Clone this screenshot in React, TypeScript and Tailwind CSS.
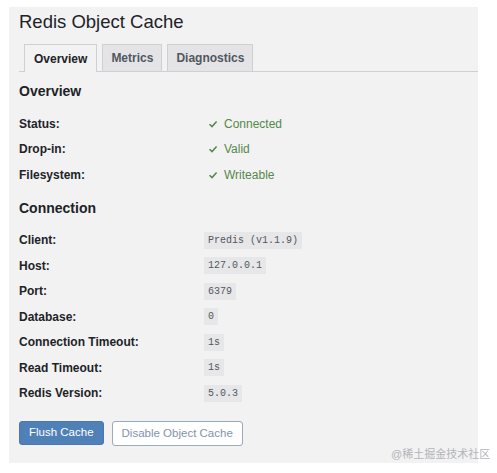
const status = [
  { label: "Status:", value: "Connected" },
  { label: "Drop-in:", value: "Valid" },
  { label: "Filesystem:", value: "Writeable" },
];

const connection = [
  { label: "Client:", value: "Predis (v1.1.9)" },
  { label: "Host:", value: "127.0.0.1" },
  { label: "Port:", value: "6379" },
  { label: "Database:", value: "0" },
  { label: "Connection Timeout:", value: "1s" },
  { label: "Read Timeout:", value: "1s" },
  { label: "Redis Version:", value: "5.0.3" },
];

function Check() {
  return (
    <svg width="10" height="10" viewBox="0 0 10 10" className="shrink-0">
      <path d="M1.5 5.2 L4 7.6 L8.6 2.4" fill="none" stroke="#55894a" strokeWidth="1.5" />
    </svg>
  );
}

export default function App() {
  return (
    <div
      className="w-[497px] h-[473px] bg-white relative overflow-hidden"
      style={{ fontFamily: '"Liberation Sans", Arial, sans-serif' }}
    >
      <div className="absolute left-[9px] top-[7px] w-[469px] h-[456px] bg-[#f2f2f3] pl-[10px] pt-[1px] text-[#1d2327]">
        <h1 className="text-[18.5px] leading-[28px] font-normal">Redis Object Cache</h1>

        {/* Tabs */}
        <div className="flex items-end gap-[5px] mt-[8px] pl-[5px] border-b border-[#cfd0d2] h-[28px]">
          <div className="h-[28px] px-[9px] flex items-center text-[12px] font-bold border border-[#cfd0d2] border-b-0 bg-[#f2f2f3] -mb-px relative">
            Overview
          </div>
          <div className="h-[27px] px-[8px] flex items-center text-[12px] font-bold text-[#50575e] border border-[#cfd0d2] border-b-0 bg-[#e4e4e6]">
            Metrics
          </div>
          <div className="h-[27px] px-[8px] flex items-center text-[12px] font-bold text-[#50575e] border border-[#cfd0d2] border-b-0 bg-[#e4e4e6]">
            Diagnostics
          </div>
        </div>

        <h2 className="text-[14px] font-bold mt-[10px] leading-[18px]">Overview</h2>
        <div className="mt-[11px] flex flex-col">
          {status.map((r) => (
            <div key={r.label} className="flex items-center h-[25.5px] text-[12px]">
              <div className="w-[189px] font-bold">{r.label}</div>
              <div className="flex items-center gap-[6px] text-[#55894a]">
                <Check />
                <span>{r.value}</span>
              </div>
            </div>
          ))}
        </div>

        <h2 className="text-[14px] font-bold mt-[11px] leading-[18px]">Connection</h2>
        <div className="mt-[11px] flex flex-col">
          {connection.map((r) => (
            <div key={r.label} className="flex items-center h-[25.5px] text-[12px]">
              <div className="w-[185px] font-bold">{r.label}</div>
              <code
                className="bg-[#e7e7e9] px-[4px] py-[2px] text-[10px] leading-[13px] text-[#50575e]"
                style={{ fontFamily: '"Liberation Mono", "DejaVu Sans Mono", monospace' }}
              >
                {r.value}
              </code>
            </div>
          ))}
        </div>

        <div className="flex gap-[8px] mt-[15px]">
          <button className="h-[24px] px-[9px] bg-[#5080b8] text-white text-[11.5px] rounded-[3px] border border-[#4a78ae]">
            Flush Cache
          </button>
          <button className="h-[25px] px-[9px] bg-white text-[#7f94ad] text-[11.5px] rounded-[3px] border border-[#9aaac0]">
            Disable Object Cache
          </button>
        </div>
      </div>

      <div
        className="absolute left-[391px] top-[446px] text-[11px] text-[#b4b4b8]"
        style={{ fontFamily: '"Liberation Sans", "Noto Sans CJK SC", sans-serif' }}
      >
        @稀土掘金技术社区
      </div>
    </div>
  );
}
